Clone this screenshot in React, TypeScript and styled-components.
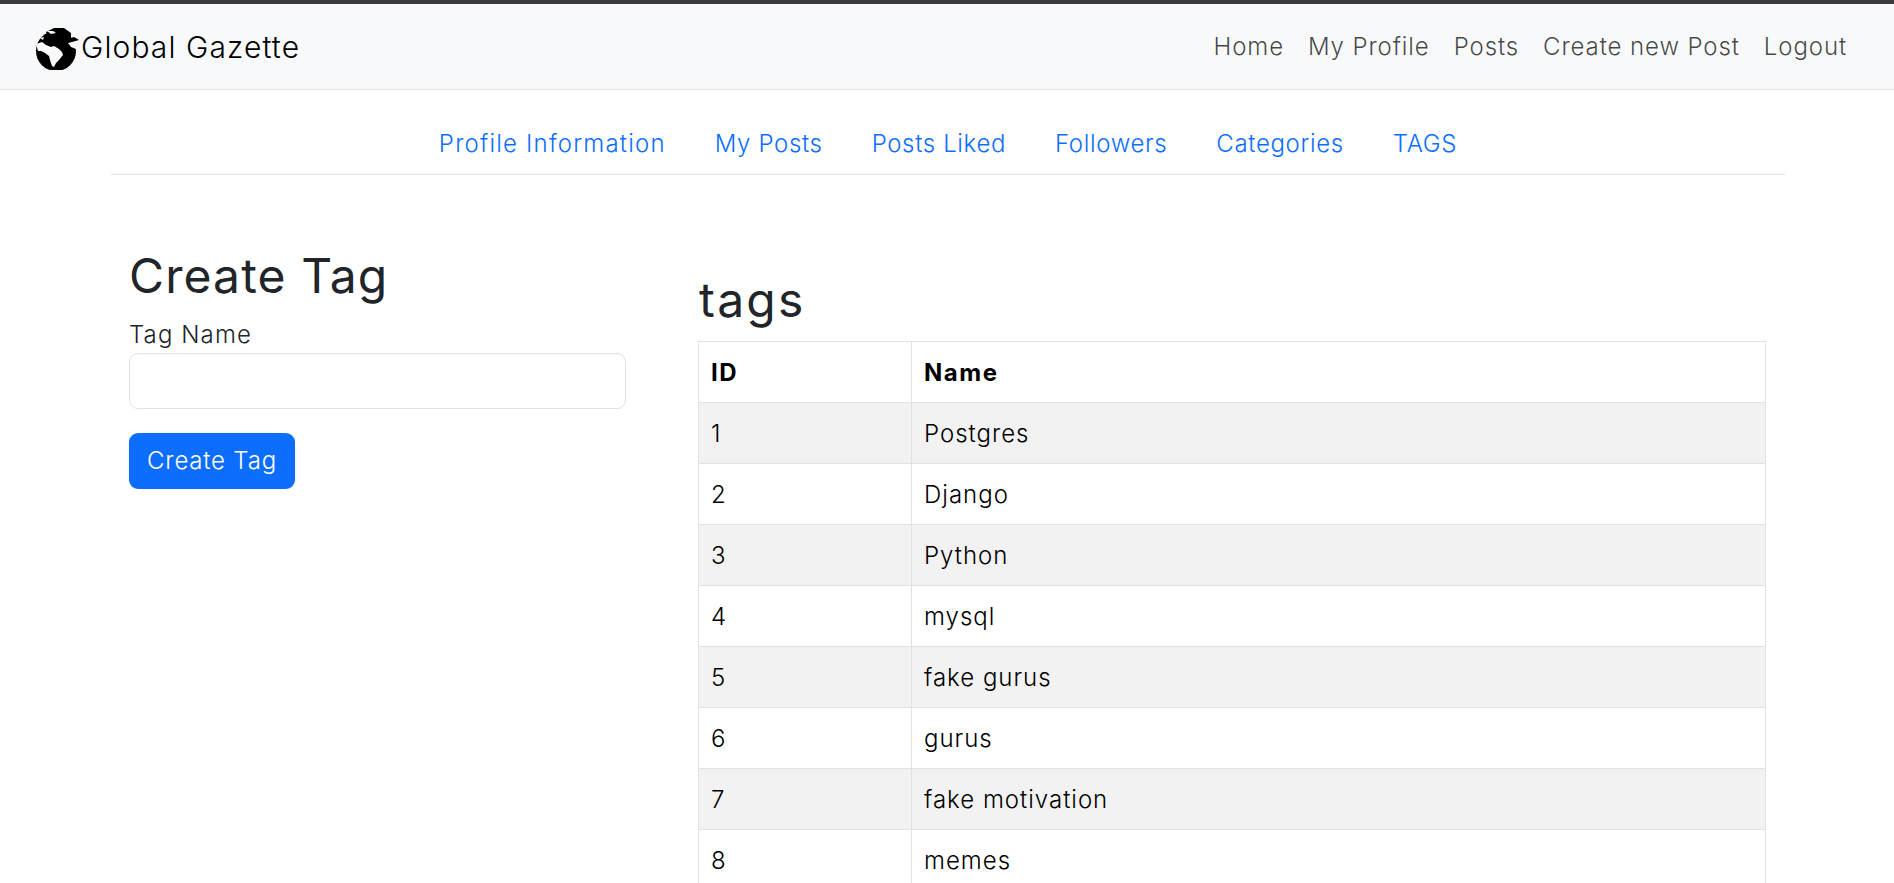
import styled, { createGlobalStyle } from "styled-components";

const GlobalStyle = createGlobalStyle`
  html, body {
    margin: 0;
    padding: 0;
    height: 100%;
    overflow: hidden;
    background: #fff;
  }
  body {
    font-family: Inter, "Liberation Sans", sans-serif;
    font-size: 24px;
    line-height: 36px;
    color: #212529;
  }
`;

// Dark strip at the very top and the light navbar under it
const Navbar = styled.nav`
  display: flex;
  align-items: center;
  justify-content: space-between;
  height: 85px;
  padding: 0 47px 0 36px;
  background: #f8f9fa;
  border-top: 4px solid #3c3c40;
  border-bottom: 1px solid #dee2e6;
`;

const Brand = styled.a`
  display: flex;
  align-items: center;
  font-size: 30px;
  font-weight: 300;
  letter-spacing: 1.1px;
  color: #000;
`;

const NavLinks = styled.div`
  display: flex;
  gap: 24px;
`;

const NavLink = styled.a`
  font-weight: 300;
  letter-spacing: 0.9px;
  color: rgba(0, 0, 0, 0.72);
`;

// Page container, holds the tab row and the two columns
const Container = styled.main`
  width: 1674px;
  margin: 0 0 0 111px;
`;

const Tabs = styled.div`
  display: flex;
  justify-content: center;
  gap: 49px;
  padding: 36px 0 12px;
  border-bottom: 1px solid #dee2e6;
`;

const Tab = styled.a<{ $wide?: boolean }>`
  font-weight: 300;
  letter-spacing: ${(p) => (p.$wide ? "1.2px" : "0.65px")};
  color: #0d6efd;
`;

const Columns = styled.div`
  display: flex;
  gap: 36px;
`;

const FormColumn = styled.section`
  box-sizing: border-box;
  width: 533px;
  padding: 72px 18px 0;
`;

const ListColumn = styled.section`
  box-sizing: border-box;
  flex: 1;
  padding: 96px 19px 0 18px;
`;

const Title = styled.h1`
  margin: 0 0 12px;
  font-size: 48px;
  line-height: 58px;
  font-weight: 400;
  letter-spacing: 1.1px;
`;

const ListTitle = styled(Title)`
  letter-spacing: 2.2px;
  padding-left: 1px;
`;

const Label = styled.label`
  display: block;
  font-weight: 300;
  letter-spacing: 1.1px;
`;

const Input = styled.input`
  display: block;
  box-sizing: border-box;
  width: 100%;
  height: 56px;
  background: #fff;
  border: 1px solid #dee2e6;
  border-radius: 9px;
`;

const Button = styled.button`
  display: block;
  margin-top: 24px;
  height: 56px;
  width: 166px;
  padding: 0;
  border: 0;
  border-radius: 9px;
  background: #0d6efd;
  color: #fff;
  font: 300 24px/36px Inter, "Liberation Sans", sans-serif;
  letter-spacing: 0.8px;
`;

const Table = styled.table`
  width: 100%;
  border-collapse: collapse;
  table-layout: fixed;
`;

const Row = styled.tr<{ $striped?: boolean }>`
  background: ${(p) => (p.$striped ? "#f2f2f2" : "#fff")};
`;

const Head = styled.th<{ $narrow?: boolean }>`
  box-sizing: border-box;
  width: ${(p) => (p.$narrow ? "213px" : "auto")};
  height: 61px;
  padding: 13px 12px 11px;
  border: 1px solid #dee2e6;
  text-align: left;
  font-weight: 700;
  letter-spacing: 1.5px;
  color: #000;
`;

const Cell = styled.td`
  height: 61px;
  box-sizing: border-box;
  padding: 13px 12px 11px;
  border: 1px solid #dee2e6;
  font-weight: 300;
  letter-spacing: 1px;
  color: #000;
`;

const tags = [
  "Postgres",
  "Django",
  "Python",
  "mysql",
  "fake gurus",
  "gurus",
  "fake motivation",
  "memes",
];

// Globe logo, black disc with the gap under north america and south america cut out
const Globe = () => (
  <svg width="45" height="46" viewBox="6 8 45 46" aria-hidden="true">
    <circle cx="26" cy="35" r="20" fill="#000" />
    <path fill="#f8f9fa" d="M33 9 L52 9 L52 35 L46 33 L41 31 L38 27 L41 24 L41 18 L36 14 Z" />
    <path fill="#000" d="M16 16 L24 12 L34 12 L41 17 L41 22 L37 26 L28 24 L18 22 Z" />
    <path fill="#000" d="M37 23 L44 21 L49 24 L42 26 L38 27 Z" />
    <path
      fill="#f8f9fa"
      d="M6 28 L12 26 L16 29 L21 31 L24 30 L29 33 L32 36 L33 39 L29 44 L26 47 L24 51 L22 50 L20 44 L19 40 L15 37 L11 35 L8 35 Z"
    />
    <path fill="#f8f9fa" d="M17 15 L23 15 L26 17 L21 18 Z M10 22 L14 21 L13 24 Z" />
  </svg>
);

const App = () => {
  return (
    <>
      <GlobalStyle />
      <Navbar>
        <Brand>
          <Globe />
          Global Gazette
        </Brand>
        <NavLinks>
          <NavLink>Home</NavLink>
          <NavLink>My Profile</NavLink>
          <NavLink>Posts</NavLink>
          <NavLink>Create new Post</NavLink>
          <NavLink>Logout</NavLink>
        </NavLinks>
      </Navbar>
      <Container>
        <Tabs>
          <Tab $wide>Profile Information</Tab>
          <Tab>My Posts</Tab>
          <Tab>Posts Liked</Tab>
          <Tab>Followers</Tab>
          <Tab>Categories</Tab>
          <Tab>TAGS</Tab>
        </Tabs>
        <Columns>
          <FormColumn>
            <Title>Create Tag</Title>
            <Label>Tag Name</Label>
            <Input />
            <Button>Create Tag</Button>
          </FormColumn>
          <ListColumn>
            <ListTitle>tags</ListTitle>
            <Table>
              <thead>
                <Row>
                  <Head $narrow>ID</Head>
                  <Head>Name</Head>
                </Row>
              </thead>
              <tbody>
                {tags.map((name, i) => (
                  <Row key={name} $striped={i % 2 === 0}>
                    <Cell>{i + 1}</Cell>
                    <Cell>{name}</Cell>
                  </Row>
                ))}
              </tbody>
            </Table>
          </ListColumn>
        </Columns>
      </Container>
    </>
  );
};

export default App;
